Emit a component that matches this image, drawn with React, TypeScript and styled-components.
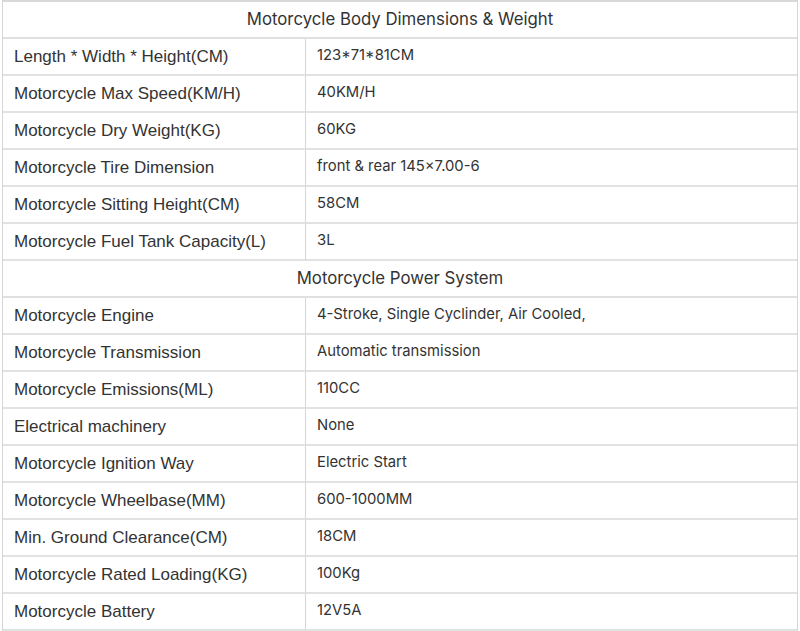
import React from "react";
import styled, { createGlobalStyle } from "styled-components";

const Global = createGlobalStyle`
  html, body { margin: 0; padding: 0; background: #fff; }
  body { font-family: Inter, "Liberation Sans", sans-serif; color: #333; }
`;

const Wrap = styled.div`
  padding: 0 2px;
`;

const Table = styled.table`
  width: 796px;
  border-collapse: separate;
  border-spacing: 0;
  table-layout: fixed;
  border-top: 2px solid #d8d8d8;
  border-left: 1px solid #d6d6d6;
  border-right: 1px solid #d6d6d6;
`;

const Row = styled.tr`
  height: 37px;
`;

const SectionCell = styled.td`
  box-sizing: border-box;
  height: 37px;
  padding: 0 0 2px;
  text-align: center;
  font-family: Inter, sans-serif;
  font-size: 16.8px;
  line-height: 20px;
  color: #333;
  border-bottom: 2px solid #e0e0e0;
`;

const LabelCell = styled.td`
  box-sizing: border-box;
  height: 37px;
  padding: 0 0 0 11px;
  font-family: "Liberation Sans", Arial, sans-serif;
  font-size: 17px;
  line-height: 20px;
  color: #333;
  border-right: 1px solid #d6d6d6;
  border-bottom: 2px solid #e2e2e2;
  vertical-align: middle;
  white-space: nowrap;
`;

const ValueCell = styled.td`
  box-sizing: border-box;
  height: 37px;
  padding: 0 0 3px 11px;
  font-family: Inter, sans-serif;
  font-size: 14.8px;
  line-height: 18px;
  color: #333;
  border-bottom: 2px solid #e2e2e2;
  vertical-align: middle;
  white-space: nowrap;
`;

type Section = { title: string; rows: [string, string][] };

const data: Section[] = [
  {
    title: "Motorcycle Body Dimensions & Weight",
    rows: [
      ["Length * Width * Height(CM)", "123*71*81CM"],
      ["Motorcycle Max Speed(KM/H)", "40KM/H"],
      ["Motorcycle Dry Weight(KG)", "60KG"],
      ["Motorcycle Tire Dimension", "front & rear 145×7.00-6"],
      ["Motorcycle Sitting Height(CM)", "58CM"],
      ["Motorcycle Fuel Tank Capacity(L)", "3L"],
    ],
  },
  {
    title: "Motorcycle Power System",
    rows: [
      ["Motorcycle Engine", "4-Stroke, Single Cyclinder, Air Cooled,"],
      ["Motorcycle Transmission", "Automatic transmission"],
      ["Motorcycle Emissions(ML)", "110CC"],
      ["Electrical machinery", "None"],
      ["Motorcycle Ignition Way", "Electric Start"],
      ["Motorcycle Wheelbase(MM)", "600-1000MM"],
      ["Min. Ground Clearance(CM)", "18CM"],
      ["Motorcycle Rated Loading(KG)", "100Kg"],
      ["Motorcycle Battery", "12V5A"],
    ],
  },
];

export default function App() {
  return (
    <Wrap>
      <Global />
      <Table>
        <colgroup>
          <col style={{ width: 303 }} />
          <col />
        </colgroup>
        <tbody>
          {data.map((s) => (
            <React.Fragment key={s.title}>
              <Row>
                <SectionCell colSpan={2}>{s.title}</SectionCell>
              </Row>
              {s.rows.map(([k, v]) => (
                <Row key={k}>
                  <LabelCell>{k}</LabelCell>
                  <ValueCell>{v}</ValueCell>
                </Row>
              ))}
            </React.Fragment>
          ))}
        </tbody>
      </Table>
    </Wrap>
  );
}
